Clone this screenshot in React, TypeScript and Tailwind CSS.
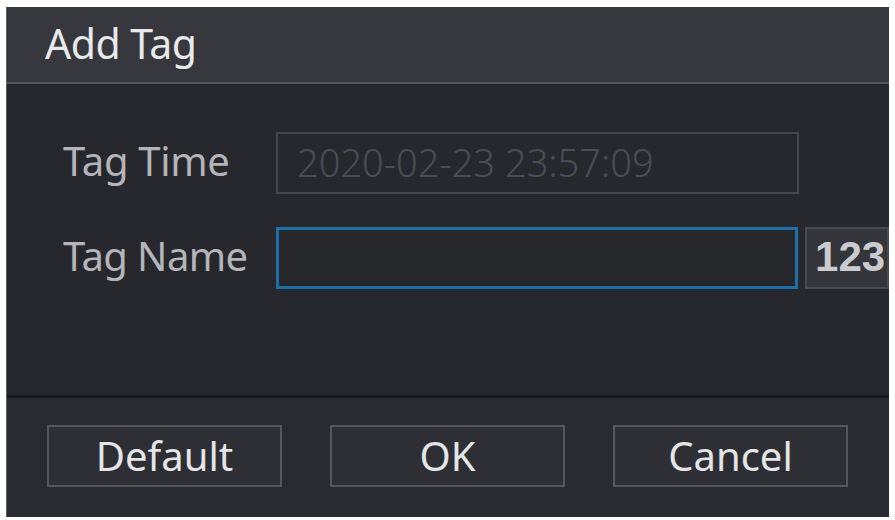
import React from "react";

const font = { fontFamily: '"Noto Sans", "Open Sans", sans-serif' };

function FooterButton({ label }: { label: string }) {
  return (
    <button
      type="button"
      className="w-[235px] h-[62px] bg-[#2e2f34] border-2 border-[#55575c] text-[#e4e5e7] text-[40px] leading-none flex items-center justify-center pb-[1px]"
    >
      {label}
    </button>
  );
}

export default function App() {
  return (
    <div className="w-[895px] h-[520px] bg-white pt-[7px] pl-[6px]" style={font}>
      <div className="w-[883px] h-[510px] flex flex-col bg-[#27282d] border-l border-[#5a5c60] overflow-hidden">
        {/* title bar */}
        <div className="h-[77px] shrink-0 bg-[#37383d] border-b-2 border-[#54565b] flex items-center pl-[38px]">
          <span className="text-[41px] text-[#e8e9eb] leading-none pb-[3px] tracking-[-0.5px]">Add Tag</span>
        </div>

        {/* form */}
        <div className="h-[311px] shrink-0 pt-[48px] pl-[56px] flex flex-col gap-[33px]">
          <div className="flex items-center">
            <span className="w-[213px] text-[40px] text-[#b3b5b9] leading-none pb-[4px] tracking-[-0.3px]">Tag Time</span>
            <div className="w-[523px] h-[62px] border-2 border-[#45474c] flex items-center pl-[19px] overflow-hidden">
              <span className="text-[38px] text-[#4b4d53] leading-none pb-[2px] font-light whitespace-nowrap">
                2020-02-23 23:57:09
              </span>
            </div>
          </div>
          <div className="flex items-center">
            <span className="w-[213px] text-[40px] text-[#b3b5b9] leading-none pb-[5px] tracking-[-0.6px]">Tag Name</span>
            <div className="w-[523px] h-[62px] border-[3px] border-[#1f6ea6] bg-[#26272b]" />
            <div
              className="ml-[7px] w-[84px] h-[62px] bg-[#33353a] border-2 border-[#494b50] flex items-center pl-[8px] text-[42px] font-bold text-[#c9cbcf] overflow-hidden whitespace-nowrap leading-none pb-[2px]"
              style={{ fontFamily: '"Liberation Sans", Arial, sans-serif' }}
            >
              123
            </div>
          </div>
        </div>

        {/* footer */}
        <div className="flex-1 border-t-[3px] border-[#18191c] bg-[#2a2b30] pt-[27px] pl-[40px] flex gap-[48px]">
          <FooterButton label="Default" />
          <FooterButton label="OK" />
          <FooterButton label="Cancel" />
        </div>
      </div>
    </div>
  );
}
